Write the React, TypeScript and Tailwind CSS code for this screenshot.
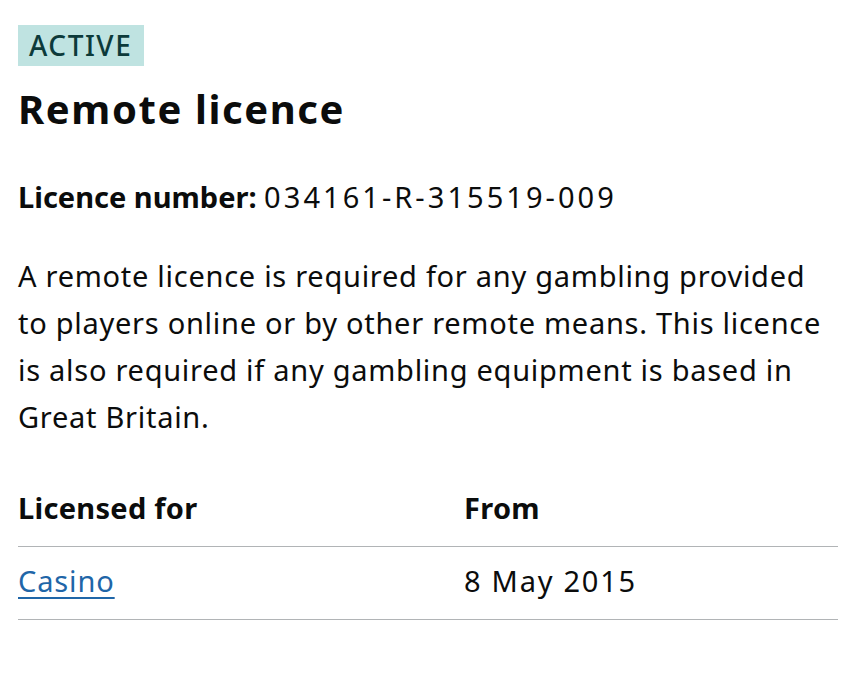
import React from 'react';

const App: React.FC = () => {
  return (
    <div className="px-[18px] pt-[25px] text-[#0b0c0c]" style={{ fontFamily: '"Noto Sans", "Open Sans", sans-serif' }}>
      <span className="inline-block bg-[#bfe3e1] pl-[11px] pr-[12px] h-[41px] leading-[41px] text-[28px] font-medium tracking-[0.055em] text-[#0c3a3a] uppercase">
        Active
      </span>
      <h1 className="mt-[15px] text-[40px] leading-[56px] font-bold tracking-[0.04em]">Remote licence</h1>

      <p className="mt-[40px] text-[29px] leading-[40px]">
        <span className="font-bold">Licence number:</span>{' '}
        <span className="tracking-[0.105em]">034161-R-315519-009</span>
      </p>

      <p className="mt-[35px] text-[29px] leading-[47px] tracking-[0.025em] max-w-[820px]">
        A remote licence is required for any gambling provided to players online or by other remote means. This licence is also required if any gambling equipment is based in Great Britain.
      </p>

      <table className="mt-[46px] w-[820px] text-[29px] border-collapse">
        <thead>
          <tr className="border-b border-[#b1b4b6]">
            <th className="w-[446px] text-left font-bold tracking-[0.01em] pb-[16px] pt-0">Licensed for</th>
            <th className="text-left font-bold tracking-[0.01em] pb-[16px] pt-0">From</th>
          </tr>
        </thead>
        <tbody>
          <tr className="border-b border-[#b1b4b6]">
            <td className="pt-[12px] pb-[17px] tracking-[0.03em]">
              <a href="#" className="text-[#1f66a8] underline underline-offset-[5px] decoration-[2px]">Casino</a>
            </td>
            <td className="pt-[12px] pb-[17px] tracking-[0.06em]">8 May 2015</td>
          </tr>
        </tbody>
      </table>
    </div>
  );
};

export default App;
